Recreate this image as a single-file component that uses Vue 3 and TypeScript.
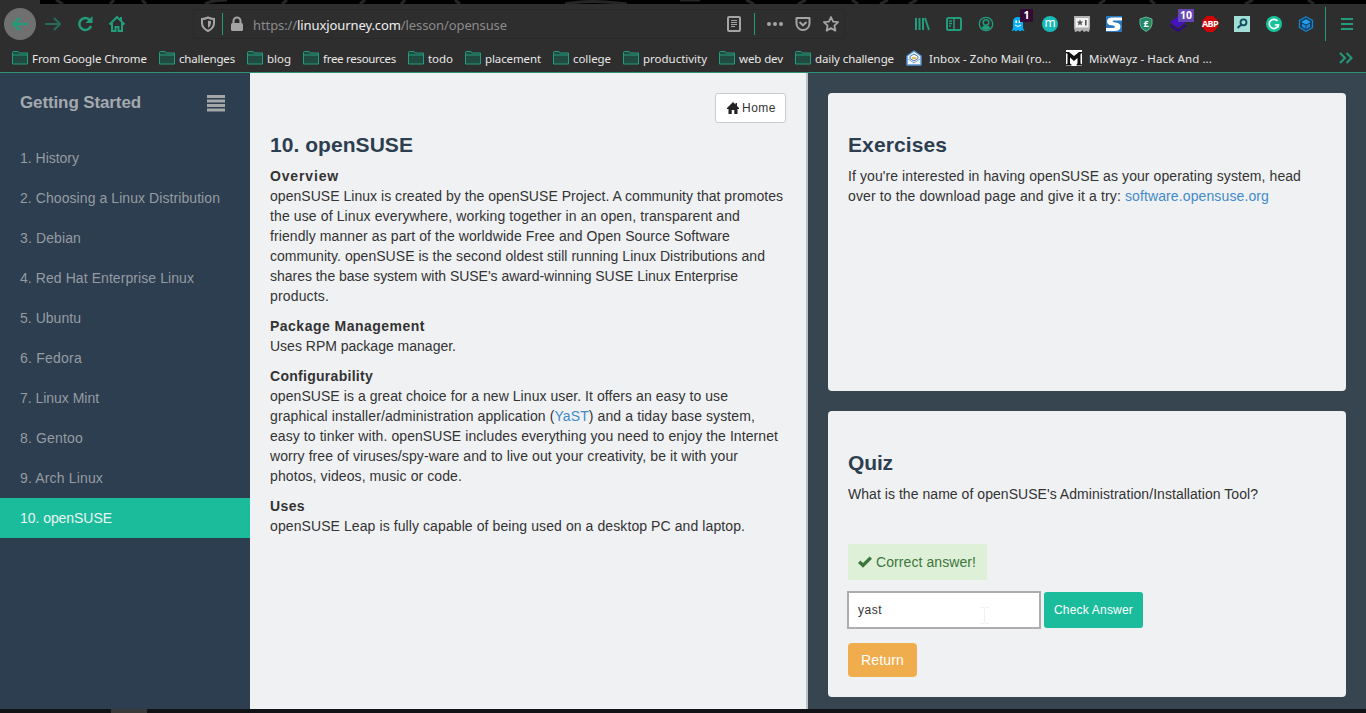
<script setup lang="ts">
interface Line {
  text: string
  width: number
  link?: string
  after?: string
}
interface Section {
  title: string
  titleWidth: number
  lines: Line[]
}

// Spreads a run of text over a given width by adjusting its tracking.
const vFit = {
  mounted(el: HTMLElement, binding: { value: number }) {
    const count = (el.textContent ?? '').length
    const natural = el.getBoundingClientRect().width
    el.style.letterSpacing = `${(binding.value - natural) / count}px`
  },
}

const bookmarks = [
  { name: 'From Google Chrome', width: 115 },
  { name: 'challenges', width: 56 },
  { name: 'blog', width: 24 },
  { name: 'free resources', width: 73 },
  { name: 'todo', width: 25 },
  { name: 'placement', width: 56 },
  { name: 'college', width: 38 },
  { name: 'productivity', width: 64 },
  { name: 'web dev', width: 44 },
  { name: 'daily challenge', width: 79 },
]

const lessons = [
  { name: '1. History', width: 59 },
  { name: '2. Choosing a Linux Distribution', width: 200 },
  { name: '3. Debian', width: 61 },
  { name: '4. Red Hat Enterprise Linux', width: 174 },
  { name: '5. Ubuntu', width: 61 },
  { name: '6. Fedora', width: 62 },
  { name: '7. Linux Mint', width: 79 },
  { name: '8. Gentoo', width: 63 },
  { name: '9. Arch Linux', width: 83 },
  { name: '10. openSUSE', width: 92, active: true },
]

const sections: Section[] = [
  {
    title: 'Overview',
    titleWidth: 69,
    lines: [
      { text: 'openSUSE Linux is created by the openSUSE Project. A community that promotes', width: 513 },
      { text: 'the use of Linux everywhere, working together in an open, transparent and', width: 470 },
      { text: 'friendly manner as part of the worldwide Free and Open Source Software', width: 460 },
      { text: 'community. openSUSE is the second oldest still running Linux Distributions and', width: 495 },
      { text: "shares the base system with SUSE's award-winning SUSE Linux Enterprise", width: 468 },
      { text: 'products.', width: 59 },
    ],
  },
  {
    title: 'Package Management',
    titleWidth: 155,
    lines: [{ text: 'Uses RPM package manager.', width: 186 }],
  },
  {
    title: 'Configurability',
    titleWidth: 103,
    lines: [
      { text: 'openSUSE is a great choice for a new Linux user. It offers an easy to use', width: 458 },
      { text: 'graphical installer/administration application (', link: 'YaST', after: ') and a tiday base system,', width: 485 },
      { text: 'easy to tinker with. openSUSE includes everything you need to enjoy the Internet', width: 508 },
      { text: 'worry free of viruses/spy-ware and to live out your creativity, be it with your', width: 468 },
      { text: 'photos, videos, music or code.', width: 192 },
    ],
  },
  {
    title: 'Uses',
    titleWidth: 35,
    lines: [{ text: 'openSUSE Leap is fully capable of being used on a desktop PC and laptop.', width: 475 }],
  },
]
</script>

<template>
  <div class="screen">
    <header class="browser">
      <svg class="wallpaper" width="1326" height="4" viewBox="0 0 1326 4">
        <path d="M16 0l7 4M74 0l-4 4M102 0l4 4M165 4q6-4 22-4M247 0l-5 4M325 0l-5 4M365 0l-4 4M415 0l5 4M525 4q24-5 62 0M640 0h20M706 0l8 4M766 0l-8 4M812 0l6 4M840 4l8-4M877 0l-8 4M1065 0l-6 4M1110 0l5 4M1205 4l8-4M1268 0l6 4" />
      </svg>
      <div class="toolbar">
        <div class="nav">
          <span class="cell back"><svg width="18" height="18" viewBox="0 0 18 18"><path class="g bold" d="M16.500 9H3M8.500 3L2.500 9l6 6" /></svg></span>
          <span class="cell forward"><svg width="18" height="18" viewBox="0 0 18 18"><path class="g thick" d="M1 9h14M10 3l6 6-6 6" /></svg></span>
          <span class="cell"><svg width="18" height="18" viewBox="0 0 18 18"><path class="g bold" d="M14 5.2A6 6 0 1 0 15 11" /><path fill="#239c7c" d="M16.500 1v7h-7z" /></svg></span>
          <span class="cell"><svg width="18" height="18" viewBox="0 0 18 18"><path class="g thick" d="M1.500 9.500L9 2l7.500 7.500M4 8v8h3.500v-4h3v4H14V8" /><path fill="#239c7c" d="M12 2h2v4h-2z" /></svg></span>
        </div>
        <div class="address">
          <svg class="shield" width="14" height="16" viewBox="0 0 14 16"><path d="M7 1.500Q10 3 13 3v4q0 5-6 8Q1 12 1 7V3q3 0 6-1.500z" fill="none" stroke="#a4a4a4" stroke-width="2" /><path d="M7 4.500v7.500q3-2 3-5V5q-2 0-3-.5z" fill="#a4a4a4" /></svg>
          <i class="divider"></i>
          <svg class="lock" width="14" height="16" viewBox="0 0 14 16"><rect x="1" y="7" width="12" height="8" rx="1.500" fill="#a4a4a4" /><path d="M3.500 8V5a3.500 3.500 0 0 1 7 0v3" fill="none" stroke="#a4a4a4" stroke-width="2" /></svg>
          <span class="url"><span v-fit="254">https://<b>linuxjourney.com</b>/lesson/opensuse</span></span>
          <svg class="reader" width="14" height="16" viewBox="0 0 14 16"><rect x="1" y="1" width="12" height="14" rx="1" fill="none" stroke="#a4a4a4" stroke-width="2" /><path d="M4 4.500h6M4 6.500h6M4 8.500h6M4 10.500h4" stroke="#a4a4a4" /></svg>
          <i class="divider reader-divider"></i>
          <svg class="dots" width="18" height="16" viewBox="0 0 18 16" fill="#a4a4a4"><circle cx="3" cy="8" r="2" /><circle cx="9" cy="8" r="2" /><circle cx="15" cy="8" r="2" /></svg>
          <svg class="pocket" width="16" height="16" viewBox="0 0 16 16" fill="none" stroke="#a4a4a4" stroke-width="2"><path d="M1.500 2h13v5.500a6.500 6.500 0 0 1-13 0z" stroke-linejoin="round" /><path d="M4.500 6L8 9.300 11.500 6" /></svg>
          <svg class="star" width="18" height="18" viewBox="0 0 18 18"><path d="M9 2l2.100 4.600 5 .6-3.700 3.400 1 5L9 13.100l-4.400 2.500 1-5L1.900 7.200l5-.6z" fill="none" stroke="#a4a4a4" stroke-width="1.800" stroke-linejoin="round" /></svg>
        </div>
        <div class="extensions">
          <span class="cell"><svg width="16" height="16" viewBox="0 0 16 16"><path class="g thick" d="M2 2v12M5.500 2v12M9 2v12M11 2l4 12" /></svg></span>
          <span class="cell"><svg width="18" height="16" viewBox="0 0 18 16"><rect class="g thick" x="2" y="2" width="14" height="12" rx="1.500" /><path class="g" d="M9 2v12M4 5h3M4 7.500h3M4 10h2" stroke-width="1.500" /></svg></span>
          <span class="cell"><svg width="16" height="16" viewBox="0 0 16 16"><circle class="g" cx="8" cy="8" r="6.700" stroke-width="1.300" /><circle class="g" cx="8" cy="6.500" r="2.800" stroke-width="1.500" /><path d="M3.500 12q1-2.500 4.500-2.500t4.500 2.500Q8 16 3.500 12z" fill="#239c7c" /></svg></span>
          <span class="cell">
            <svg width="16" height="16" viewBox="0 0 16 16"><path d="M3 12V6q0-5 5-5t5 5v6l1.500 3-3-.8-1.500 1.300L8 14l-2 1.500-1.500-1.300-3 .8z" fill="#0aaef5" /><path d="M6.200 4.500v2.500M9.500 4.500v2.500" stroke="#fff" stroke-width="1.600" /><path d="M5 9q3 3 6 0" fill="none" stroke="#fff" /></svg>
            <em class="badge one">1</em>
          </span>
          <span class="cell"><span class="disc">m</span></span>
          <span class="cell"><svg width="16" height="16" viewBox="0 0 16 16"><path d="M0 0h16v12l-1 4-3-1-2 1-2-2-2 2-2-1-3 1-1-4z" fill="#b0b0b0" /><path d="M1.500 2h13v9.500h-13z" fill="#f2f2f2" /><path d="M6 3.500l.9 2 2.200.2-1.600 1.500.5 2.300L6 8.300 4 9.500l.5-2.300-1.600-1.500 2.200-.2zM11 4h1.600v5.500H11z" fill="#555" /></svg></span>
          <span class="cell"><span class="tile s"><svg width="16" height="16" viewBox="0 0 16 16"><path d="M16 1.500H6.500Q1 1.500 1 5.500q0 3.500 5 3.700 3 .3 3 1.500 0 1.300-2 1.300H0v3h8.500q6 0 6-4.500 0-3.500-5-4-3-.2-3-1.200Q6.500 4.500 8 4.500h8z" fill="#fff" /></svg></span></span>
          <span class="cell"><span class="guard"><svg width="14" height="16" viewBox="0 0 14 16"><path d="M7 1l6 2v5q0 4.500-6 7.500Q1 12.500 1 8V3z" fill="#248765" stroke="#64b497" /></svg><b>£</b></span></span>
          <span class="cell">
            <svg width="18" height="16" viewBox="0 0 18 16"><path d="M9 0l8 6-8 6-8-6z" fill="#4312bd" /><path d="M1 8l8 6 8-6v2l-8 6-8-6z" fill="#32009b" /></svg>
            <em class="badge ten">10</em>
          </span>
          <span class="cell"><span class="abp"><svg width="16" height="16" viewBox="0 0 16 16"><path d="M4.800 0h6.400L16 4.800v6.400L11.200 16H4.800L0 11.200V4.800z" fill="#d00606" /></svg><b>ABP</b></span></span>
          <span class="cell"><span class="tile find"><svg width="16" height="16" viewBox="0 0 16 16" fill="none" stroke="#0c4d5c"><circle cx="9.500" cy="6.300" r="3" stroke-width="1.800" /><path d="M7.200 8.700L3.500 12" stroke-width="2" /></svg></span></span>
          <span class="cell"><svg width="16" height="16" viewBox="0 0 16 16"><circle cx="8" cy="8" r="8" fill="#15c39a" /><path d="M11.500 5A4.600 4.600 0 1 0 12.400 9H8.800" fill="none" stroke="#fff" stroke-width="1.700" /><path d="M12.300 8v3.500" stroke="#fff" stroke-width="1.500" /></svg></span>
          <span class="cell"><svg width="16" height="16" viewBox="0 0 16 16"><path d="M8 .8l6.500 3.600v7.200L8 15.200l-6.500-3.600V4.400z" fill="#123d60" stroke="#1b80c4" stroke-width="1.300" /><path d="M8 3.200l4 2.200v1L8 8.500 4 6.400v-1z" fill="#25a0ec" /><path d="M4 7.600l3.600 2v3.300L4 10.800zM12 7.600l-3.600 2v3.300l3.600-2.100z" fill="#1d89d5" /></svg></span>
        </div>
        <i class="tall-divider"></i>
        <svg class="menu" width="14" height="14" viewBox="0 0 14 14"><path class="g thick" d="M1 2h12M1 7h12M1 12h12" /></svg>
      </div>
      <div class="bookmarks">
        <span v-for="item in bookmarks" :key="item.name" class="bookmark">
          <svg width="16" height="14" viewBox="0 0 16 14"><path d="M.5 13V1.500q0-1 1-1H6l1.200 1.500h8.300V13z" fill="#214a40" stroke="#239c7c" /><path d="M1 4h14.500" stroke="#239c7c" /></svg>
          <span class="label" :style="{ width: item.width + 'px' }"><span v-fit="item.width">{{ item.name }}</span></span>
        </span>
        <span class="bookmark site mail">
          <svg width="16" height="16" viewBox="0 0 16 16"><path d="M1 6L8 1l7 5v9H1z" fill="#f4f8fc" stroke="#5590cf" stroke-width="1.500" stroke-linejoin="round" /><path d="M4 6.500L8 4l4 2.500v2L8 11 4 8.500z" fill="#fff" stroke="#4776ad" /><path d="M5.500 7.500q2.500-1.500 5 0v1l-2.500 1-2.500-1z" fill="#e8b757" /><path d="M2 9l6 4 6-4" fill="none" stroke="#7fa6d3" /></svg>
          <span class="label"><span v-fit="122">Inbox - Zoho Mail (ro...</span></span>
        </span>
        <span class="bookmark site">
          <svg width="16" height="16" viewBox="0 0 16 16"><path d="M0 0h16v16H0z" fill="#fff" /><path d="M0 2h3l5 4 5-4h3v1l-1.500 1v9.500l1.500 1v1h-5.500v-1l1-1V8L8 11 4 7.500v6l1.500 1v1H0v-1l1.500-1V4L0 3z" fill="#111" /></svg>
          <span class="label"><span v-fit="123">MixWayz - Hack And ...</span></span>
        </span>
        <svg class="more" width="14" height="12" viewBox="0 0 14 12"><path class="g thick" d="M1 1l5 5-5 5M7.500 1l5 5-5 5" /></svg>
      </div>
    </header>

    <main class="page">
      <nav class="sidebar">
        <div class="side-head">
          <h2><span v-fit="121">Getting Started</span></h2>
          <svg width="18" height="17" viewBox="0 0 18 17"><path d="M0 1.500h18M0 6h18M0 10.500h18M0 15h18" stroke="#a5a6a8" stroke-width="3" /></svg>
        </div>
        <ul>
          <li v-for="item in lessons" :key="item.name" :class="{ active: item.active }"><span v-fit="item.width">{{ item.name }}</span></li>
        </ul>
      </nav>

      <article class="lesson">
        <div class="actions">
          <button class="home">
            <svg width="12" height="12" viewBox="0 0 12 12"><path d="M6 0l2.500 2.400V1H10v2.900L12 6v1h-1.500v5H7.300V8H4.700v4H1.500V7H0V6z" fill="#222" /></svg>
            <span v-fit="34">Home</span>
          </button>
        </div>
        <h1><span v-fit="143">10. openSUSE</span></h1>
        <section v-for="section in sections" :key="section.title" class="block">
          <h3><span v-fit="section.titleWidth">{{ section.title }}</span></h3>
          <p v-for="line in section.lines" :key="line.text"><span v-fit="line.width">{{ line.text }}<a v-if="line.link">{{ line.link }}</a>{{ line.after }}</span></p>
        </section>
      </article>

      <aside class="panels">
        <section class="panel exercises">
          <h1><span v-fit="99">Exercises</span></h1>
          <p><span v-fit="453">If you're interested in having openSUSE as your operating system, head</span></p>
          <p><span v-fit="421">over to the download page and give it a try: <a>software.opensuse.org</a></span></p>
        </section>
        <section class="panel quiz">
          <h1><span v-fit="45">Quiz</span></h1>
          <p><span v-fit="410">What is the name of openSUSE's Administration/Installation Tool?</span></p>
          <div class="correct">
            <svg width="14" height="12" viewBox="0 0 14 12"><path d="M0 7l2.400-2.400L5 7 11.600.4 14 2.800 5 11.800z" fill="#3c763d" /></svg>
            <span v-fit="100">Correct answer!</span>
          </div>
          <div class="answer">
            <div class="field">
              <span v-fit="24">yast</span>
              <svg width="9" height="17" viewBox="0 0 9 17"><path d="M0 .5h3.500l1 1 1-1H9M4.500 1v15M0 16.500h3.500l1-1 1 1H9" fill="none" stroke="#f1f1f3" /></svg>
            </div>
            <button class="check"><span v-fit="79">Check Answer</span></button>
          </div>
          <button class="return"><span v-fit="43">Return</span></button>
        </section>
      </aside>
    </main>
    <footer class="taskbar"><i></i></footer>
  </div>
</template>

<style>
body {
  margin: 0;
  overflow: hidden;
}
</style>

<style scoped>
.screen {
  width: 1366px;
  height: 713px;
  display: flex;
  flex-direction: column;
  overflow: hidden;
  font: 14px/20px "Liberation Sans", Arial, sans-serif;
  color: #333;
}
.screen * {
  box-sizing: border-box;
}
svg {
  display: block;
  flex: none;
}
span {
  white-space: nowrap;
}
h1, h2, h3, p, ul {
  margin: 0;
  padding: 0;
}
button {
  font-family: inherit;
  border: 0;
}
.browser {
  height: 73px;
  flex: none;
  background: #2e2e2e;
  border-bottom: 1px solid #2f9076;
  font-family: "Noto Sans", sans-serif;
}
.wallpaper {
  margin-left: 40px;
  background: #000;
}
.wallpaper path {
  fill: none;
  stroke: #252525;
  stroke-width: 3;
}
.g {
  fill: none;
  stroke: #239c7c;
}
.thick {
  stroke-width: 2;
}
.bold {
  stroke-width: 2.5;
}
.toolbar {
  height: 40px;
  display: flex;
  align-items: center;
}
.nav {
  display: flex;
  width: 193px;
  padding-left: 4px;
}
.cell {
  position: relative;
  width: 32px;
  height: 32px;
  display: flex;
  align-items: center;
  justify-content: center;
}
.back {
  border-radius: 50%;
  background: #707070;
  margin-right: 1px;
}
.forward svg {
  opacity: 0.55;
}
.address {
  width: 652px;
  height: 30px;
  display: flex;
  align-items: center;
  padding-left: 7px;
  border: 1px solid #292929;
  border-radius: 2px;
}
.divider {
  width: 1px;
  height: 22px;
  margin: 0 7px;
  background: #239c7c;
}
.url {
  width: 474px;
  margin-left: 9px;
  font-size: 13px;
  color: #8b8b8b;
}
.url > span {
  position: relative;
  top: 1px;
}
.url b {
  font-weight: 400;
  color: #eee;
}
.reader-divider {
  margin: 0 11px 0 13px;
}
.pocket {
  margin-left: 11px;
}
.star {
  margin-left: 11px;
}
.extensions {
  display: flex;
  margin-left: 61px;
}
.badge {
  position: absolute;
  top: 1px;
  height: 13px;
  font: bold 10.5px/13px "Noto Sans", sans-serif;
  color: #fff;
  text-align: center;
}
.one {
  left: 18px;
  width: 13px;
  background: #330a35;
}
.ten {
  left: 16px;
  width: 16px;
  background: #6645b5;
}
.disc {
  width: 16px;
  height: 16px;
  border-radius: 50%;
  background: #18b9b7;
  color: #fff;
  font: 12px/14px "Noto Sans", sans-serif;
  text-align: center;
}
.tile {
  width: 16px;
  height: 16px;
}
.s {
  background: #2a78bd;
}
.find {
  background: #a3ddd7;
}
.guard, .abp {
  display: grid;
  place-items: center;
}
.guard > *, .abp > * {
  grid-area: 1 / 1;
}
.guard b {
  font-size: 9px;
  line-height: 14px;
  color: #fff;
}
.abp b {
  font: bold 9px/16px "Open Sans", "Noto Sans", sans-serif;
  letter-spacing: -0.7px;
  color: #fff;
}
.tall-divider {
  width: 1px;
  height: 34px;
  margin: 0 14px 0 3px;
  background: #239c7c;
}
.bookmarks {
  height: 28px;
  padding-left: 12px;
  display: flex;
  align-items: center;
  color: #e8e8e8;
  font-size: 11.5px;
}
.bookmark {
  display: flex;
  align-items: center;
  gap: 4px;
  margin-right: 12px;
}
.label {
  display: block;
  height: 20px;
  padding-top: 1px;
}
.site {
  gap: 7px;
}
.mail {
  margin-right: 15px;
}
.more {
  margin: 0 13px 0 auto;
}
.page {
  height: 636px;
  flex: none;
  display: grid;
  grid-template-columns: 250px 558px 558px;
}
.sidebar {
  background: #2c3e50;
  color: #969ba2;
}
.side-head {
  display: flex;
  justify-content: space-between;
  align-items: center;
  height: 62px;
  padding: 0 25px 2px 20px;
}
.side-head h2 {
  font-size: 17px;
  line-height: 24px;
  color: #a5a9ae;
}
.sidebar ul {
  list-style: none;
  padding-top: 3px;
}
.sidebar li {
  height: 40px;
  line-height: 40px;
  padding-left: 20px;
}
.sidebar .active {
  background: #1abc9c;
  color: #ecf5f3;
}
.lesson {
  background: #f0f1f3;
  border-right: 2px solid #b9c3c9;
  padding: 20px 20px 0;
}
.actions {
  display: flex;
  justify-content: flex-end;
}
.home {
  width: 71px;
  height: 30px;
  display: flex;
  align-items: center;
  gap: 3px;
  padding: 0 10px 0 11px;
  border: 1px solid #ccc;
  border-radius: 3px;
  background: #fff;
  color: #333;
  font-size: 12px;
}
h1 {
  font-size: 21px;
  line-height: 24px;
  color: #2c3e50;
}
.lesson h1 {
  margin: 10px 0 9px;
}
.block {
  margin-bottom: 10px;
}
h3 {
  font-size: 14px;
  line-height: 20px;
}
p {
  height: 20px;
}
a {
  color: #428bca;
}
.panels {
  background: #36454f;
  padding: 20px;
  display: flex;
  flex-direction: column;
  gap: 20px;
}
.panel {
  background: #f0f1f3;
  border-radius: 4px;
  padding: 40px 20px 0;
}
.panel h1 {
  margin-bottom: 9px;
}
.exercises {
  height: 298px;
}
.quiz {
  height: 286px;
}
.correct {
  display: flex;
  align-items: center;
  gap: 4px;
  width: 139px;
  height: 36px;
  margin-top: 40px;
  padding-left: 10px;
  background: #dff0d8;
  color: #3c763d;
}
.answer {
  display: flex;
  align-items: center;
  gap: 3px;
  margin: 11px 0 14px -1px;
}
.field {
  display: flex;
  justify-content: space-between;
  align-items: center;
  width: 194px;
  height: 38px;
  padding: 0 50px 0 9px;
  border: 2px solid #adadaf;
  background: #fff;
  font-size: 12px;
}
.field svg {
  margin-top: 10px;
}
.check {
  width: 99px;
  height: 36px;
  padding: 0;
  border-radius: 3px;
  background: #1abc9c;
  color: #fff;
  font-size: 12px;
}
.return {
  display: block;
  width: 69px;
  height: 34px;
  padding: 0;
  border-radius: 4px;
  background: #f0ad4e;
  color: #fff;
  font-size: 14px;
}
.taskbar {
  height: 4px;
  background: #111215;
}
.taskbar i {
  display: block;
  width: 36px;
  height: 4px;
  margin-left: 111px;
  background: #393939;
}
</style>
